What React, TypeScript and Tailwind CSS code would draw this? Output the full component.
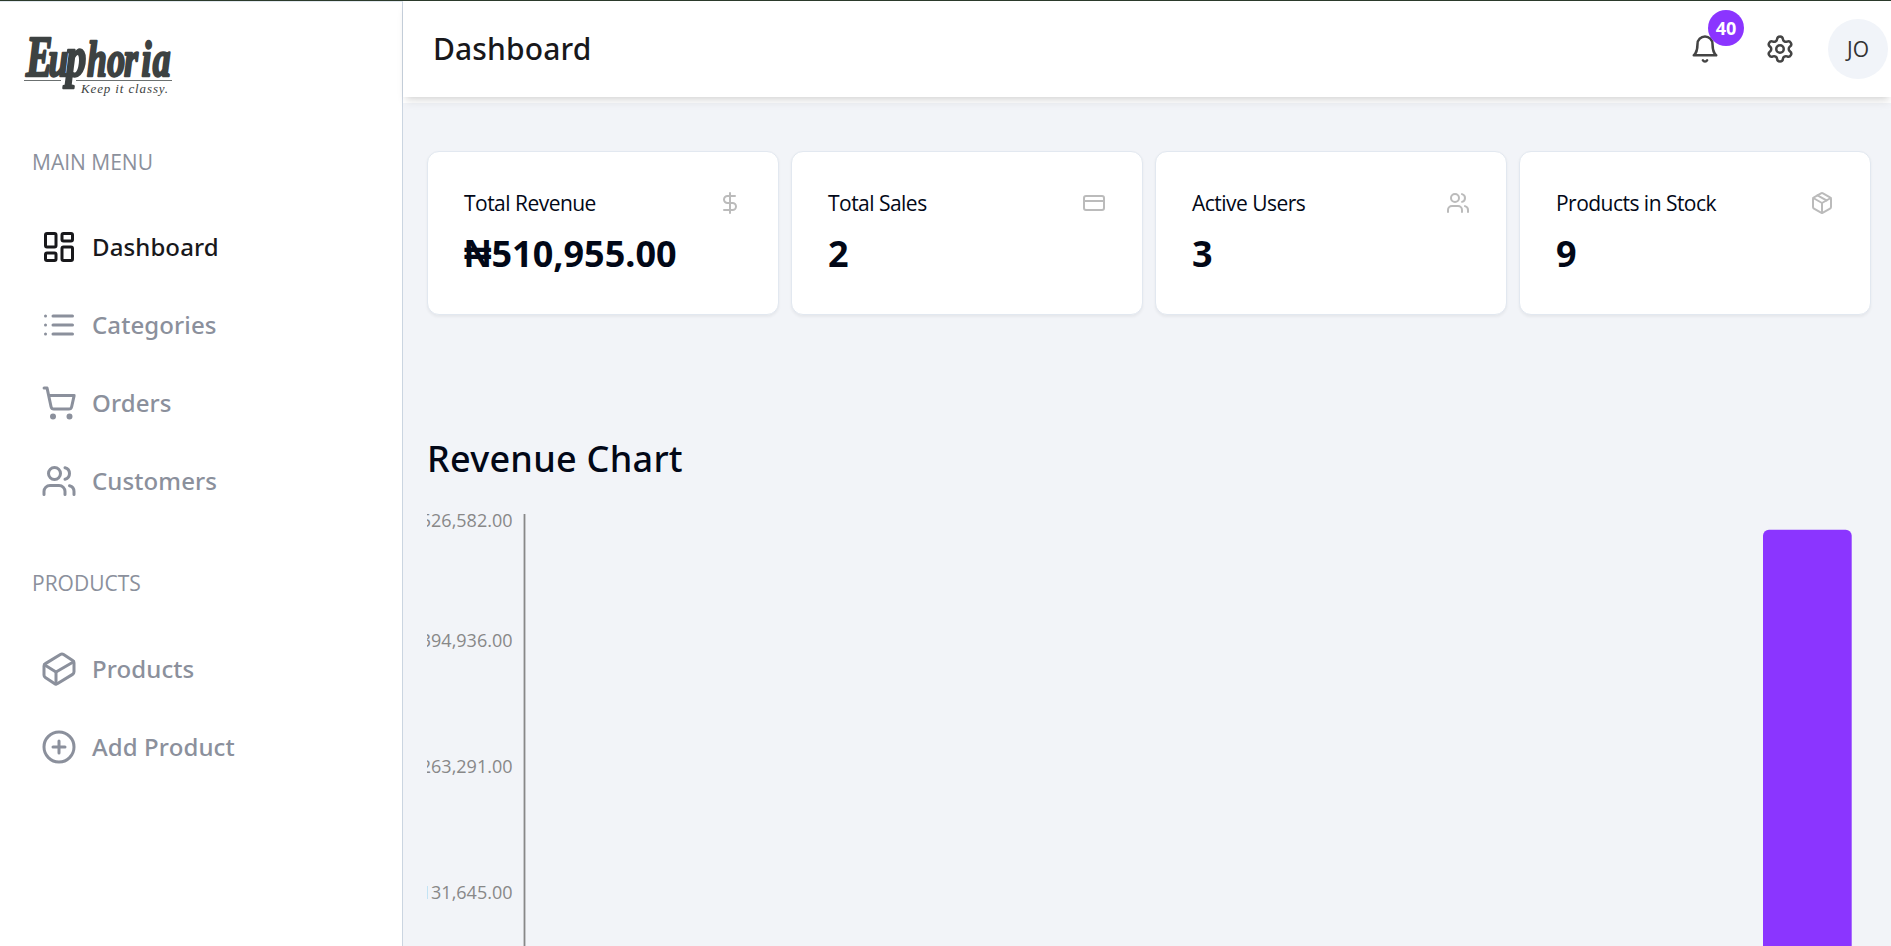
import type { ReactNode } from "react";
import {
  CirclePlus,
  CreditCard,
  Cuboid,
  DollarSign,
  LayoutDashboard,
  Package,
  Settings,
  ShoppingCart,
  Users,
} from "lucide-react";

function ListIcon() {
  return (
    <svg width="36" height="36" viewBox="0 0 24 24" fill="none" stroke="currentColor" strokeWidth="2" strokeLinecap="round">
      <path d="M8 6h13M8 12h13M8 18h13M3 6h.01M3 12h.01M3 18h.01" />
    </svg>
  );
}

function BellIcon() {
  return (
    <svg width="30" height="30" viewBox="0 0 24 24" fill="none" stroke="currentColor" strokeWidth="2" strokeLinecap="round" strokeLinejoin="round">
      <path d="M6 8a6 6 0 0 1 12 0c0 7 3 9 3 9H3s3-2 3-9" />
      <path d="M10.3 21a1.94 1.94 0 0 0 3.4 0" />
    </svg>
  );
}

function Logo() {
  return (
    <svg width="150" height="64" viewBox="0 0 150 64" fill="#3d4242" role="img" aria-label="Euphoria">
      <text transform="translate(0 41.5) scale(0.7 1)" x="3 35 60 90 119 143 168 184" y="0" fontFamily="Liberation Serif, serif" fontWeight="700" fontStyle="italic" fontSize="51" stroke="#3d4242" strokeWidth="2.4" strokeLinejoin="round">
        <tspan fontSize="57">E</tspan>u<tspan fontSize="58">p</tspan>horia
      </text>
      <path d="M0 46.5h37M52 46.5h96" stroke="#6b7070" strokeWidth="1" />
      <text x="57" y="59" fontFamily="Liberation Serif, serif" fontStyle="italic" fontSize="13" textLength="87" lengthAdjust="spacing">
        Keep it classy.
      </text>
    </svg>
  );
}

function NavItem({ icon, label, active = false }: { icon: ReactNode; label: string; active?: boolean }) {
  return (
    <a className={`flex h-[78px] items-center gap-[15px] pl-[41px] font-['Noto_Sans',sans-serif] text-[24px] font-medium tracking-[0.1px] ${active ? "text-[#18181b]" : "text-[#8b909c]"}`}>
      {icon}
      <span>{label}</span>
    </a>
  );
}

function SectionTitle({ children }: { children: ReactNode }) {
  return <h2 className="flex h-[30px] items-center pl-8 text-[21px] text-[#8b909c]">{children}</h2>;
}

function Sidebar() {
  return (
    <aside className="flex w-[403px] shrink-0 flex-col border-t border-r border-[#cbd5e1] border-t-[#e2e8f0] bg-white">
      <div className="pt-[32px] pl-6">
        <Logo />
      </div>
      <div className="mt-[50px]">
        <SectionTitle>MAIN MENU</SectionTitle>
      </div>
      <nav className="mt-[30px] flex flex-col">
        <NavItem active label="Dashboard" icon={<LayoutDashboard size={36} />} />
        <NavItem label="Categories" icon={<ListIcon />} />
        <NavItem label="Orders" icon={<ShoppingCart size={36} />} />
        <NavItem label="Customers" icon={<Users size={36} />} />
      </nav>
      <div className="mt-[49px]">
        <SectionTitle>PRODUCTS</SectionTitle>
      </div>
      <nav className="mt-[31px] flex flex-col">
        <NavItem label="Products" icon={<Cuboid size={36} />} />
        <NavItem label="Add Product" icon={<CirclePlus size={36} />} />
      </nav>
    </aside>
  );
}

function Header() {
  return (
    <header className="relative z-10 flex h-[96px] shrink-0 items-center justify-between bg-white pr-[3px] pl-[30px] shadow-[0_6px_9px_-1.5px_rgba(0,0,0,0.1),0_3px_6px_-3px_rgba(0,0,0,0.1)]">
      <h1 className="pb-px font-['Noto_Sans',sans-serif] text-[30px] font-medium tracking-[0.13px] text-[#18181b]">Dashboard</h1>
      <div className="flex items-center text-[#444]">
        <div className="relative">
          <BellIcon />
          <span className="absolute -top-[24px] left-[18px] flex size-9 items-center justify-center rounded-full bg-[#8b35ff] text-[18px] font-bold text-white">
            40
          </span>
        </div>
        <Settings size={30} className="ml-[45px]" />
        <div className="ml-[33px] flex size-[60px] items-center justify-center rounded-full bg-[#f1f4f9] pt-px text-[21px] text-[#333]">
          JO
        </div>
      </div>
    </header>
  );
}

function StatCard({ label, value, currency, icon }: { label: string; value: string; currency?: string; icon: ReactNode }) {
  return (
    <section className="h-[164px] rounded-[12px] border border-[#e2e8f0] bg-white px-[36px] pt-[36px] shadow-[0_1.5px_3px_rgba(0,0,0,0.05)]">
      <div className="flex h-[30px] items-center justify-between">
        <h3 className="pt-[2px] text-[21px] tracking-tight">{label}</h3>
        <span className="text-[#bbb]">{icon}</span>
      </div>
      <p className="mt-[12px] font-['Noto_Sans',sans-serif] text-[36px] leading-[48px] font-bold">
        {currency && <span className="font-['Liberation_Sans',sans-serif] text-[38px] leading-none">{currency}</span>}
        {value}
      </p>
    </section>
  );
}

const ticks = [
  { label: "₦526,582.00", y: 22.3 },
  { label: "₦394,936.00", y: 142 },
  { label: "₦263,291.00", y: 268 },
  { label: "₦131,645.00", y: 394 },
];

function RevenueChart() {
  return (
    <svg width="1444" height="441" viewBox="0 0 1444 441" className="block overflow-hidden">
      {ticks.map((t) => (
        <text key={t.label} x="85.5" y={t.y} textAnchor="end" fontSize="18" fill="#888">
          {t.label}
        </text>
      ))}
      <path d="M97.5 9V441" stroke="#888" strokeWidth="1.8" />
      <path d="M1336 441V30.7a6 6 0 0 1 6-6h76.7a6 6 0 0 1 6 6V441z" fill="#8b35ff" />
    </svg>
  );
}

export default function App() {
  return (
    <div className="flex h-[946px] w-full overflow-hidden border-t border-[#2b3a2b] bg-white font-['Open_Sans','Noto_Sans',sans-serif] text-[#020817]">
      <Sidebar />
      <div className="flex min-w-0 flex-1 flex-col">
        <Header />
        <main className="mt-[6px] flex-1 overflow-hidden bg-[#f2f4f8] pr-[20px] pl-6">
          <div className="mt-[48px] grid grid-cols-4 gap-3">
            <StatCard label="Total Revenue" currency="₦" value="510,955.00" icon={<DollarSign size={24} />} />
            <StatCard label="Total Sales" value="2" icon={<CreditCard size={24} />} />
            <StatCard label="Active Users" value="3" icon={<Users size={24} />} />
            <StatCard label="Products in Stock" value="9" icon={<Package size={24} />} />
          </div>
          <h2 className="mt-[117px] font-['Noto_Sans',sans-serif] text-[36px] leading-[54px] font-medium tracking-[0.26px]">Revenue Chart</h2>
          <div className="mt-[19px]">
            <RevenueChart />
          </div>
        </main>
      </div>
    </div>
  );
}
